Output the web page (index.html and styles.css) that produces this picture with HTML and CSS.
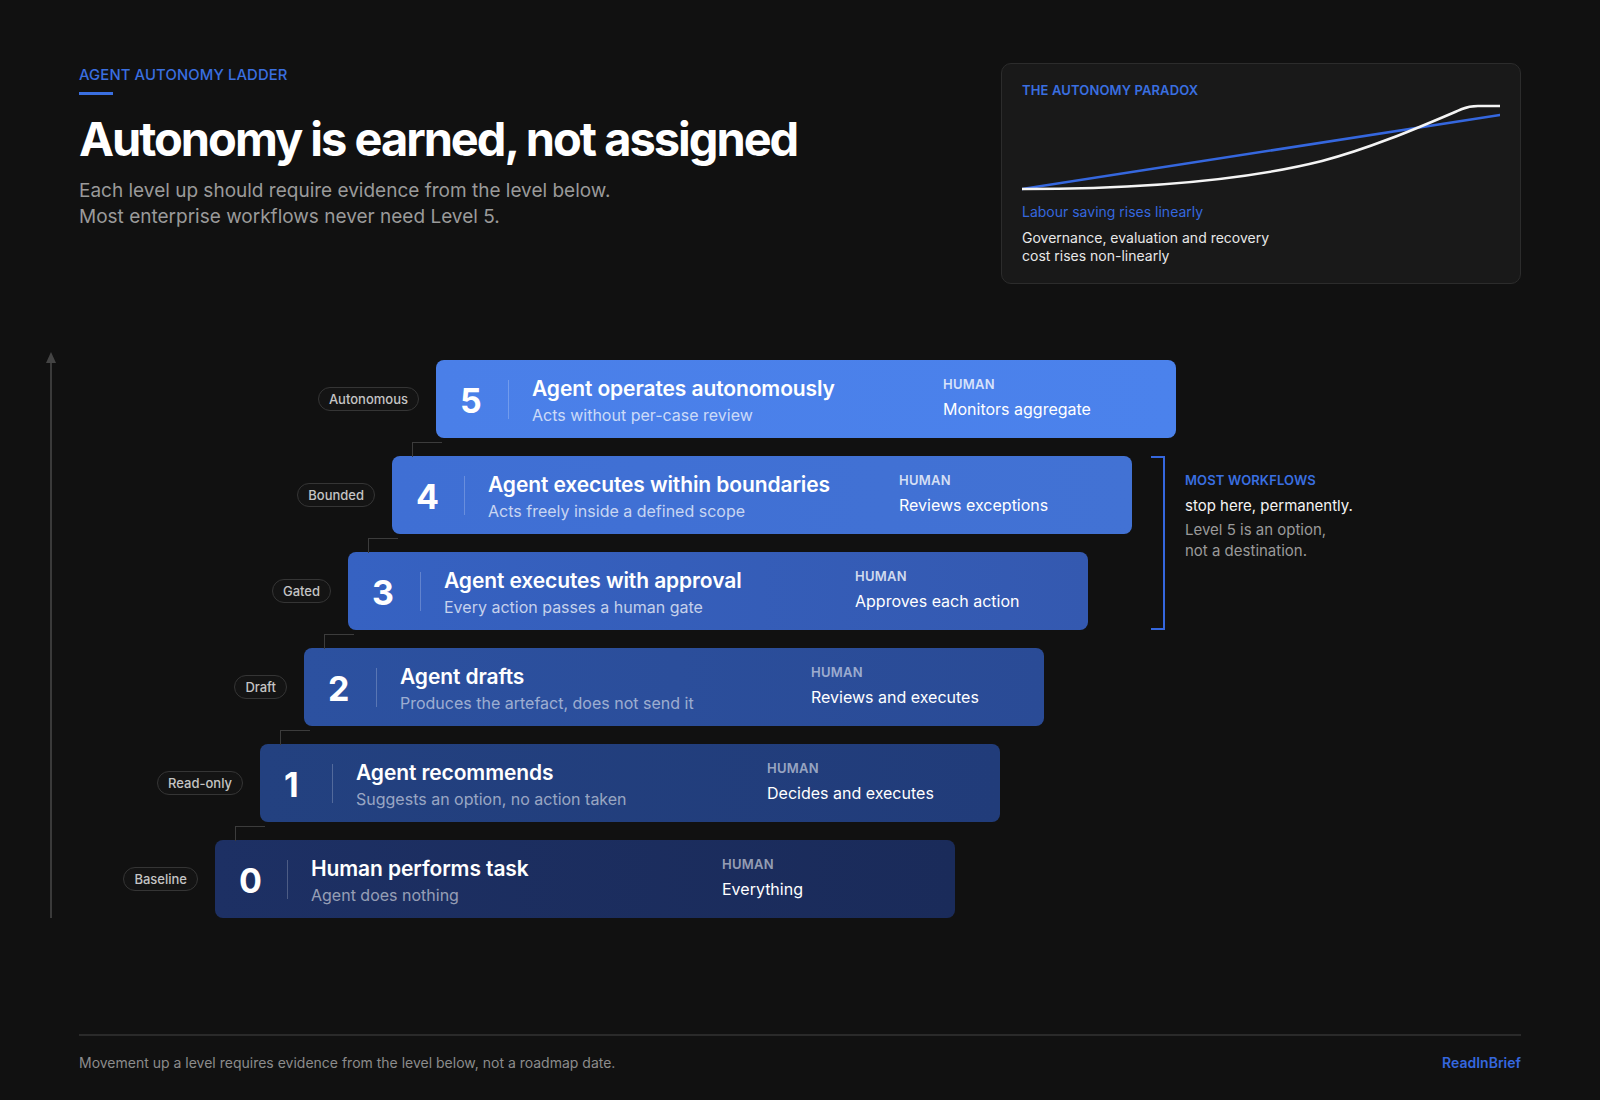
FILE: index.html
```html
<!DOCTYPE html>
<html lang="en">
<head>
<meta charset="utf-8">
<title>Agent Autonomy Ladder</title>
<link rel="stylesheet" href="styles.css">
</head>
<body>
<div class="page">
  <header class="header">
    <div class="intro">
      <div class="eyebrow">AGENT AUTONOMY LADDER</div>
      <div class="eyebrow-bar"></div>
      <h1 class="title">Autonomy is earned, not assigned</h1>
      <p class="lede">Each level up should require evidence from the level below.<br>Most enterprise workflows never need Level 5.</p>
    </div>
    <aside class="paradox">
      <div class="paradox-title">THE AUTONOMY PARADOX</div>
      <svg class="paradox-chart" width="478" height="92" viewBox="0 0 478 92">
        <line x1="0" y1="88" x2="478" y2="14" stroke="#3567de" stroke-width="2.6" stroke-linecap="round"/>
        <path d="M0 88 C120 88 220 80 300 60 C350 47 400 25 440 8 C446 5.5 450 5 456 5 L478 5" fill="none" stroke="#f4f4f4" stroke-width="2.6" stroke-linecap="round" stroke-linejoin="round"/>
      </svg>
      <div class="paradox-blue">Labour saving rises linearly</div>
      <div class="paradox-white">Governance, evaluation and recovery<br>cost rises non-linearly</div>
    </aside>
  </header>

  <section class="ladder">
    <div class="axis"></div>

    <div class="step lv5">
      <div class="tag-area"><span class="tag">Autonomous</span></div>
      <div class="card">
        <div class="num">5</div><div class="sep"></div>
        <div class="main"><div class="c-title">Agent operates autonomously</div><div class="c-sub">Acts without per-case review</div></div>
        <div class="human"><div class="h-label">HUMAN</div><div class="h-text">Monitors aggregate</div></div>
      </div>
    </div>

    <div class="step lv4">
      <div class="tag-area"><span class="tag">Bounded</span></div>
      <div class="card">
        <div class="num">4</div><div class="sep"></div>
        <div class="main"><div class="c-title">Agent executes within boundaries</div><div class="c-sub">Acts freely inside a defined scope</div></div>
        <div class="human"><div class="h-label">HUMAN</div><div class="h-text">Reviews exceptions</div></div>
      </div>
    </div>

    <div class="note">
      <div class="bracket"></div>
      <div class="note-text">
        <div class="note-title">MOST WORKFLOWS</div>
        <div class="note-strong">stop here, permanently.</div>
        <div class="note-muted">Level 5 is an option,<br>not a destination.</div>
      </div>
    </div>

    <div class="step lv3">
      <div class="tag-area"><span class="tag">Gated</span></div>
      <div class="card">
        <div class="num">3</div><div class="sep"></div>
        <div class="main"><div class="c-title">Agent executes with approval</div><div class="c-sub">Every action passes a human gate</div></div>
        <div class="human"><div class="h-label">HUMAN</div><div class="h-text">Approves each action</div></div>
      </div>
    </div>

    <div class="step lv2">
      <div class="tag-area"><span class="tag">Draft</span></div>
      <div class="card">
        <div class="num">2</div><div class="sep"></div>
        <div class="main"><div class="c-title">Agent drafts</div><div class="c-sub">Produces the artefact, does not send it</div></div>
        <div class="human"><div class="h-label">HUMAN</div><div class="h-text">Reviews and executes</div></div>
      </div>
    </div>

    <div class="step lv1">
      <div class="tag-area"><span class="tag">Read-only</span></div>
      <div class="card">
        <div class="num">1</div><div class="sep"></div>
        <div class="main"><div class="c-title">Agent recommends</div><div class="c-sub">Suggests an option, no action taken</div></div>
        <div class="human"><div class="h-label">HUMAN</div><div class="h-text">Decides and executes</div></div>
      </div>
    </div>

    <div class="step lv0">
      <div class="tag-area"><span class="tag">Baseline</span></div>
      <div class="card">
        <div class="num">0</div><div class="sep"></div>
        <div class="main"><div class="c-title">Human performs task</div><div class="c-sub">Agent does nothing</div></div>
        <div class="human"><div class="h-label">HUMAN</div><div class="h-text">Everything</div></div>
      </div>
    </div>
  </section>

  <footer class="footer">
    <span class="foot-note">Movement up a level requires evidence from the level below, not a roadmap date.</span>
    <span class="brand">ReadInBrief</span>
  </footer>
</div>
</body>
</html>
```

FILE: styles.css
```css
* { box-sizing: border-box; }
html, body { margin: 0; padding: 0; }
body {
  background: #111111;
  color: #f2f2f2;
  font-family: Inter, "Noto Sans", "Liberation Sans", sans-serif;
  width: 1600px;
  height: 1100px;
  overflow: hidden;
}
.page { width: 1600px; height: 1100px; display: flex; flex-direction: column; }

/* header */
.header {
  display: flex;
  justify-content: space-between;
  align-items: flex-start;
  padding: 63px 79px 0 79px;
}
.intro { padding-top: 3px; }
.eyebrow {
  color: #3a6fe0;
  font-size: 14.8px;
  line-height: 18px;
  font-weight: 500;
  letter-spacing: 0.01em;
}
.eyebrow-bar { width: 34px; height: 3px; background: #3a6fe0; margin-top: 8px; }
.title {
  margin: 16px 0 0 0;
  font-size: 47px;
  line-height: 55px;
  font-weight: 700;
  letter-spacing: -0.043em;
  color: #ffffff;
}
.lede {
  margin: 12px 0 0 0;
  font-size: 19px;
  line-height: 25.5px;
  color: #9a9a9a;
}

.paradox {
  width: 520px;
  height: 221px;
  background: #191919;
  border: 1px solid #2c2c2c;
  border-radius: 10px;
  padding: 18px 20px 0 20px;
}
.paradox-title {
  color: #3a6fe0;
  font-size: 13px;
  line-height: 16px;
  font-weight: 600;
  letter-spacing: 0.01em;
}
.paradox-chart { display: block; margin-top: 3px; }
.paradox-blue { margin-top: 10px; color: #3567de; font-size: 14px; line-height: 18px; }
.paradox-white { margin-top: 8px; color: #e8e8e8; font-size: 14px; line-height: 18px; }

/* ladder */
.ladder {
  margin-top: 76px;
  display: grid;
  grid-template-columns: 100px 1032px 1fr;
  grid-template-rows: repeat(6, 78px);
  row-gap: 18px;
}
.axis {
  grid-column: 1;
  grid-row: 1 / 7;
  justify-self: start;
  margin-left: 50px;
  margin-top: -6px;
  width: 2px;
  background: #3a3a3a;
  position: relative;
}
.axis::before {
  content: "";
  position: absolute;
  top: -2px;
  left: -4px;
  border-left: 5px solid transparent;
  border-right: 5px solid transparent;
  border-bottom: 11px solid #444444;
}

.step { display: flex; align-items: center; grid-column: 2; }
.lv5 { grid-row: 1; grid-column: 2 / 4; --off: 336px; }
.lv4 { grid-row: 2; --off: 292px; }
.lv3 { grid-row: 3; --off: 248px; }
.lv2 { grid-row: 4; --off: 204px; }
.lv1 { grid-row: 5; --off: 160px; }
.lv0 { grid-row: 6; --off: 115px; }

.tag-area {
  width: var(--off);
  flex: none;
  display: flex;
  justify-content: flex-end;
  padding-right: 17px;
}
.tag {
  display: inline-flex;
  align-items: center;
  height: 24px;
  padding: 0 10px;
  border: 1px solid #353535;
  border-radius: 12px;
  background: #141414;
  color: #c4c4c4;
  font-size: 13px;
  font-weight: 500;
}

.card {
  position: relative;
  width: 740px;
  height: 78px;
  flex: none;
  border-radius: 8px;
  display: flex;
  align-items: center;
  padding-left: 24px;
}
.card::before {
  content: "";
  position: absolute;
  left: 20px;
  top: -14px;
  width: 29px;
  height: 14px;
  border-left: 1.5px solid #3c3c3c;
  border-top: 1.5px solid #3c3c3c;
}
.lv5 .card::before { display: none; }

.lv5 .card { background: linear-gradient(90deg, #4a7fe8, #4b82ec); }
.lv4 .card { background: linear-gradient(90deg, #3f6fd4, #4272d4); }
.lv3 .card { background: linear-gradient(90deg, #3662c2, #3459b0); }
.lv2 .card { background: linear-gradient(90deg, #2c51a0, #2a4b96); }
.lv1 .card { background: linear-gradient(90deg, #234180, #213c7a); }
.lv0 .card { background: linear-gradient(90deg, #1d3064, #1a2b5a); }

.num {
  width: 48px;
  flex: none;
  font-size: 34px;
  font-weight: 700;
  color: #ffffff;
  line-height: 40px;
  padding-top: 3px;
}
.sep { width: 1px; height: 39px; background: rgba(255,255,255,0.22); flex: none; }
.main { margin-left: 23px; width: 411px; flex: none; align-self: flex-start; padding-top: 15.5px; }
.c-title { font-size: 21px; line-height: 26px; font-weight: 600; color: #ffffff; letter-spacing: -0.005em; }
.c-sub { margin-top: 2.5px; font-size: 16px; line-height: 22px; color: rgba(255,255,255,0.72); }
.lv2 .c-sub, .lv1 .c-sub, .lv0 .c-sub { color: rgba(255,255,255,0.55); }

.human { align-self: flex-start; padding-top: 15.5px; }
.h-label { font-size: 13px; line-height: 16px; font-weight: 600; letter-spacing: 0.02em; color: rgba(255,255,255,0.78); }
.lv2 .h-label, .lv1 .h-label, .lv0 .h-label { color: rgba(255,255,255,0.55); }
.h-text { margin-top: 7.5px; font-size: 16px; line-height: 20px; color: #ffffff; }

/* note */
.note {
  grid-column: 3;
  grid-row: 2 / 4;
  display: flex;
  align-items: stretch;
  padding-left: 19px;
}
.bracket {
  width: 14px;
  flex: none;
  border-top: 2px solid #3567de;
  border-right: 2px solid #3567de;
  border-bottom: 2px solid #3567de;
}
.note-text { margin-left: 20px; padding-top: 16px; }
.note-title { color: #3a6fe0; font-size: 13px; line-height: 16px; font-weight: 600; letter-spacing: 0.01em; }
.note-strong { margin-top: 8px; color: #f4f4f4; font-size: 15px; line-height: 20px; }
.note-muted { margin-top: 3px; color: #9a9a9a; font-size: 15px; line-height: 21px; }

/* footer */
.footer {
  margin: 116px 79px 0 79px;
  border-top: 2px solid #2a2a2a;
  display: flex;
  justify-content: space-between;
  align-items: center;
  padding-top: 17px;
  line-height: 20px;
}
.foot-note { color: #8c8c8c; font-size: 14px; }
.brand { color: #3567de; font-size: 14px; font-weight: 600; }
```
